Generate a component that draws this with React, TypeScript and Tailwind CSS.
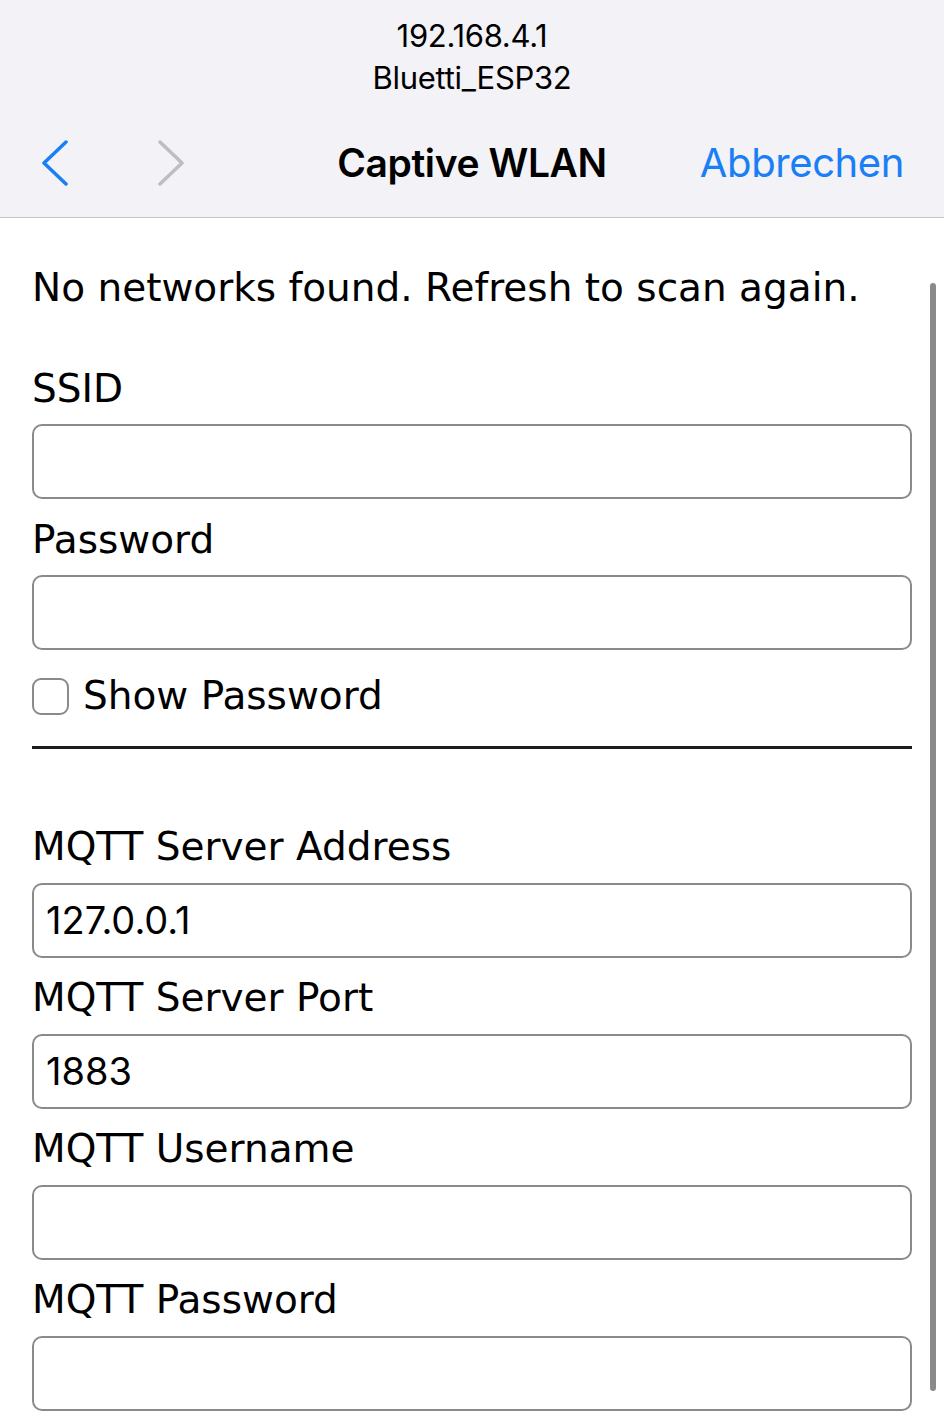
const fields = [
  { label: "MQTT Server Address", value: "127.0.0.1" },
  { label: "MQTT Server Port", value: "1883" },
  { label: "MQTT Username", value: "" },
  { label: "MQTT Password", value: "" },
];

const body = { fontFamily: '"DejaVu Sans", Verdana, sans-serif' };
const ui = { fontFamily: 'Inter, "Liberation Sans", Arial, sans-serif' };

function Field({ label, value = "" }: { label: string; value?: string }) {
  return (
    <div>
      <div className="flex h-[76px] items-center pt-[6px] text-[39px] text-black">{label}</div>
      <div
        className="flex h-[75px] items-center rounded-[10px] border-2 border-[#8a8a8a] bg-white px-[12px] text-[38px] text-black"
        style={ui}
      >
        {value}
      </div>
    </div>
  );
}

export default function App() {
  return (
    <div className="relative h-[1416px] w-[944px] overflow-hidden bg-white">
      <header className="h-[218px] border-b border-[#c6c6c8] bg-[#f2f2f7]" style={ui}>
        <div className="pt-[15px] text-center text-[31px] leading-[42px] tracking-[-0.3px] text-black">192.168.4.1</div>
        <div className="text-center text-[31px] leading-[42px] tracking-[-0.3px] text-black">Bluetti_ESP32</div>
        <div className="relative mt-[38px] flex h-[52px] items-center px-[40px]">
          <svg width="30" height="46" viewBox="0 0 30 46" fill="none">
            <path d="M26 2 L4 23 L26 44" stroke="#1a7ef5" strokeWidth="3.5" strokeLinecap="round" strokeLinejoin="round" />
          </svg>
          <svg className="ml-[86px]" width="30" height="46" viewBox="0 0 30 46" fill="none">
            <path d="M4 2 L26 23 L4 44" stroke="#bdbdc2" strokeWidth="3.5" strokeLinecap="round" strokeLinejoin="round" />
          </svg>
          <div className="absolute left-0 right-0 text-center text-[39px] font-semibold tracking-[-0.4px] text-black">
            Captive WLAN
          </div>
          <div className="ml-auto text-[40px] tracking-[-0.4px] text-[#1a7ef5]">Abbrechen</div>
        </div>
      </header>

      <main className="pl-[32px] pr-[32px]" style={body}>
        <div className="flex h-[130px] items-center pt-[10px] text-[39px] text-black">
          No networks found. Refresh to scan again.
        </div>
        <Field label="SSID" />
        <Field label="Password" />
        <div className="mt-[17px] flex items-center gap-[14px]">
          <div className="h-[37px] w-[37px] rounded-[9px] border-2 border-[#8a8a8a]" />
          <span className="text-[39px] text-black">Show Password</span>
        </div>
        <div className="mt-[20px] h-[3px] bg-[#1c1c1c]" />
        <div className="h-[58px]" />
        {fields.map((f) => (
          <Field key={f.label} label={f.label} value={f.value} />
        ))}
      </main>

      <div className="absolute right-[8px] top-[283px] h-[1108px] w-[6px] rounded-full bg-[#8a8a8a]" />
    </div>
  );
}
